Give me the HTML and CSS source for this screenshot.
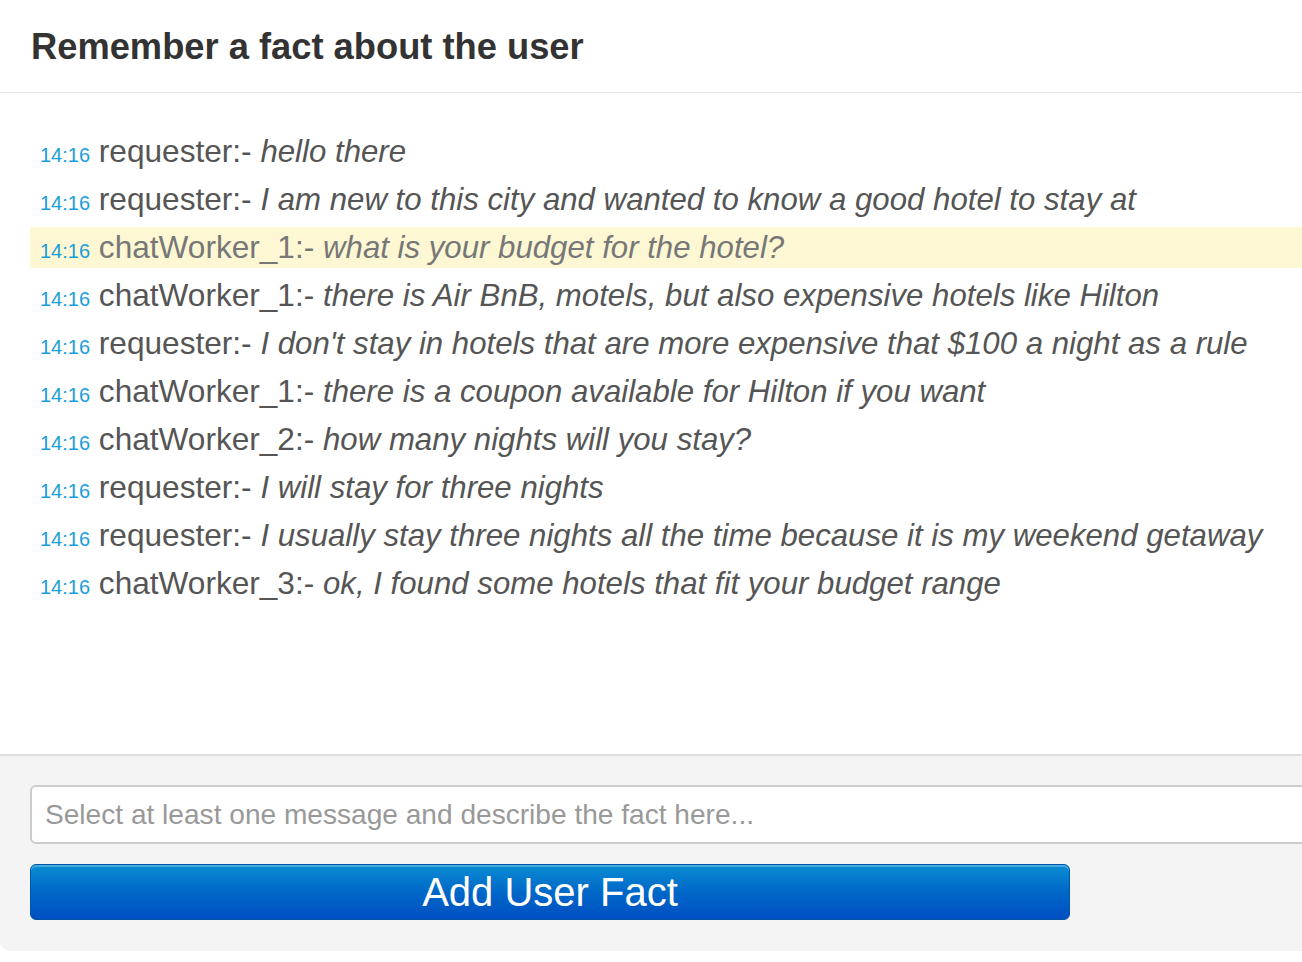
FILE: index.html
```html
<!DOCTYPE html>
<html>
<head>
<meta charset="utf-8">
<title>Remember a fact about the user</title>
<link rel="stylesheet" href="styles.css">
</head>
<body>
<div class="modal">
  <div class="modal-header">
    <h3 class="title">Remember a fact about the user</h3>
  </div>
  <div class="modal-body">
    <ul class="messages">
      <li class="msg"><span class="time">14:16</span> <span class="who">requester:-</span> <em class="text">hello there</em></li>
      <li class="msg"><span class="time">14:16</span> <span class="who">requester:-</span> <em class="text">I am new to this city and wanted to know a good hotel to stay at</em></li>
      <li class="msg selected"><span class="time">14:16</span> <span class="who">chatWorker_1:-</span> <em class="text">what is your budget for the hotel?</em></li>
      <li class="msg"><span class="time">14:16</span> <span class="who">chatWorker_1:-</span> <em class="text">there is Air BnB, motels, but also expensive hotels like Hilton</em></li>
      <li class="msg"><span class="time">14:16</span> <span class="who">requester:-</span> <em class="text">I don't stay in hotels that are more expensive that $100 a night as a rule</em></li>
      <li class="msg"><span class="time">14:16</span> <span class="who">chatWorker_1:-</span> <em class="text">there is a coupon available for Hilton if you want</em></li>
      <li class="msg"><span class="time">14:16</span> <span class="who">chatWorker_2:-</span> <em class="text">how many nights will you stay?</em></li>
      <li class="msg"><span class="time">14:16</span> <span class="who">requester:-</span> <em class="text">I will stay for three nights</em></li>
      <li class="msg"><span class="time">14:16</span> <span class="who">requester:-</span> <em class="text">I usually stay three nights all the time because it is my weekend getaway</em></li>
      <li class="msg"><span class="time">14:16</span> <span class="who">chatWorker_3:-</span> <em class="text">ok, I found some hotels that fit your budget range</em></li>
    </ul>
  </div>
  <div class="modal-footer">
    <input class="fact-input" type="text" placeholder="Select at least one message and describe the fact here...">
    <button class="btn-primary" type="button">Add User Fact</button>
  </div>
</div>
</body>
</html>
```
FILE: styles.css
```css
html, body {
  margin: 0;
  padding: 0;
  background: #ffffff;
  overflow: hidden;
}

body {
  font-family: "Liberation Sans", Arial, Helvetica, sans-serif;
  color: #555555;
}

.modal {
  width: 1340px;
  background: #ffffff;
  border-top-left-radius: 6px;
}

.modal-header {
  height: 92px;
  border-bottom: 1px solid #e5e5e5;
  padding: 0 0 0 31px;
  display: flex;
  align-items: center;
}

.title {
  margin: 0;
  font-size: 36.3px;
  font-weight: bold;
  color: #333333;
  line-height: 40px;
  padding-top: 1px;
}

.modal-body {
  height: 661px;
  border-bottom: 2px solid #dedede;
}

.messages {
  list-style: none;
  margin: 0;
  padding: 38px 0 0 30px;
  display: flex;
  flex-direction: column;
  gap: 8px;
}

.msg {
  height: 40px;
  line-height: 40px;
  padding-left: 10px;
  white-space: nowrap;
  font-size: 31.6px;
  color: #555555;
}

.msg.selected {
  background: #fdf8d3;
  color: #777777;
  height: 41px;
  margin-bottom: -1px;
}

.time {
  font-size: 20px;
  color: #1a9ddb;
}

.who {
  font-size: 31.6px;
}

.text {
  font-style: italic;
  font-size: 31.2px;
}

.modal-footer {
  background: #f4f4f4;
  border-bottom-left-radius: 10px;
  padding: 29px 0 31px 30px;
  display: flex;
  flex-direction: column;
  align-items: flex-start;
  gap: 20px;
}

.fact-input {
  box-sizing: border-box;
  width: 1300px;
  height: 59px;
  border: 2px solid #cccccc;
  border-radius: 6px;
  background: #ffffff;
  padding: 0 13px;
  font-family: "Liberation Sans", Arial, Helvetica, sans-serif;
  font-size: 28.1px;
  color: #555555;
  outline: none;
}

.fact-input::placeholder {
  color: #999999;
}

.btn-primary {
  box-sizing: border-box;
  width: 1040px;
  height: 56px;
  border: 1px solid #0057a8;
  border-radius: 6px;
  background: linear-gradient(to bottom, #0a8cd3 0%, #0068c8 50%, #004fc2 100%);
  box-shadow: inset 0 2px 0 rgba(255, 255, 255, 0.25);
  color: #ffffff;
  font-family: "Liberation Sans", Arial, Helvetica, sans-serif;
  font-size: 40px;
  line-height: 52px;
  padding: 0;
  text-align: center;
}
```
